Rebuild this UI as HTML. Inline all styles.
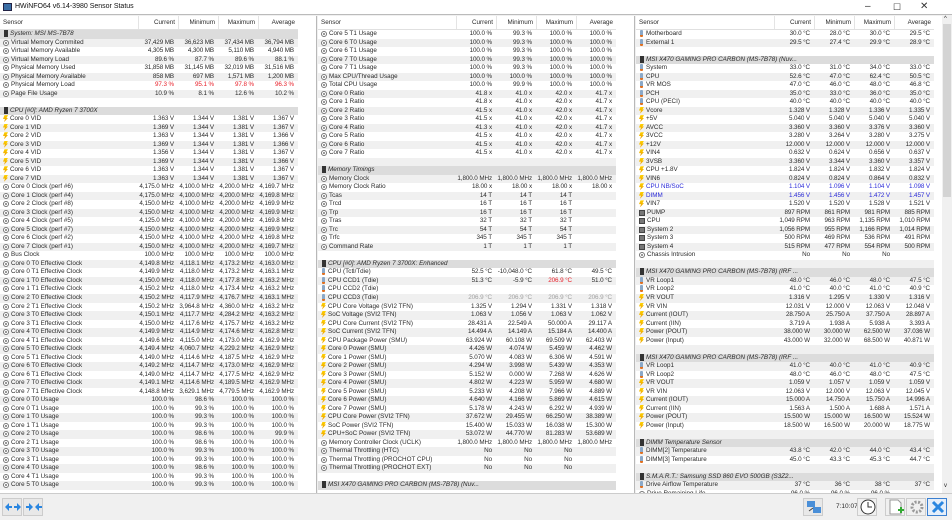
<!DOCTYPE html>
<html><head><meta charset="utf-8">
<style>
*{margin:0;padding:0;box-sizing:border-box}
body{width:952px;height:520px;overflow:hidden;background:#f0f0f0;font-family:"Liberation Sans",sans-serif;font-size:6.3px;color:#2a2a2a;position:relative}
.tb{position:absolute;left:0;top:0;width:952px;height:15px;background:#fff;border-bottom:1px solid #bbb}
.tb .t{position:absolute;left:15px;top:3px;font-size:7px;color:#111}
.tb .ico{position:absolute;left:3px;top:3px;width:9px;height:8px;background:#3a6ea5;border:1px solid #224}
.wc{position:absolute;top:1px;font-size:10px;color:#333}
.p{position:absolute;top:16px;height:477px;overflow:hidden;background:#fff;border-right:1px solid #b8b8b8}
.h{height:14px;display:flex;border-bottom:1px solid #e0e0e0;width:298px}
.h span{display:block;width:40px;text-align:right;padding-right:3px;line-height:13px;border-left:1px solid #e4e4e4}
.h span:first-child{width:138px;text-align:left;padding-left:3px;border-left:none}
.rs>div{height:8.53px;display:flex;width:298px;line-height:8.5px;white-space:nowrap;overflow:hidden}
.rs>div:nth-child(even){background:#f0f0f0}
.rs>div.g{background:#dcdcdc;font-style:italic}
.rs b{font-weight:normal;display:block;width:138px;overflow:hidden;padding-left:2px}
.rs .g b{overflow:visible;width:298px}
.rs s{text-decoration:none;display:block;width:40px;text-align:right;padding-right:4px;letter-spacing:-0.1px}
.red s{color:#e8202a}.blu s,.blu b{color:#2b2bd8}.gry s{color:#a0a0a0}
i{display:inline-block;width:6px;height:6px;margin:1px 2px 0 1px;vertical-align:top}
i.o{border:1px solid #777;border-radius:50%;background:radial-gradient(circle,#777 0 1px,#fff 1px)}
i.v{width:5px;height:7px;margin-top:0;background:linear-gradient(#ffd200,#e89a00);clip-path:polygon(30% 0,100% 0,70% 40%,100% 40%,20% 100%,40% 55%,0 55%)}
i.t{width:3px;height:7px;margin:0 3px 0 2px;margin-top:0;background:linear-gradient(#8aa8c8 0 70%,#e07020 70%);border-radius:1px}
i.f{background:#777;border:1px solid #444}
i.c{width:4px;height:7px;margin-top:0;background:#333;margin-left:2px}
.sb{position:absolute;left:942px;top:16px;width:10px;height:477px;background:#f0f0f0}
.sb div{position:absolute;left:1px;top:8px;width:8px;height:173px;background:#d4d4d4}
.bot{position:absolute;left:0;top:493px;width:952px;height:27px;background:#f0f0f0;border-top:1px solid #ccc}
.btn{position:absolute;top:4px;width:20px;height:18px;border:1px solid #ccc;background:#e8e8e8}
</style></head><body>
<div class="tb"><div class="ico"></div><div class="t">HWiNFO64 v6.14-3980 Sensor Status</div>
<div class="wc" style="left:865px">–</div><div class="wc" style="left:893px;font-size:9px;top:2px">☐</div><div class="wc" style="left:920px">✕</div></div>

<div class="p" style="left:0;width:317px">
<div class="h"><span>Sensor</span><span>Current</span><span>Minimum</span><span>Maximum</span><span>Average</span></div>
<div class="rs">
<div class="g"><b><i class="c"></i>System: MSI MS-7B78</b></div>
<div><b><i class="o"></i>Virtual Memory Commited</b><s>37,429 MB</s><s>36,623 MB</s><s>37,434 MB</s><s>36,794 MB</s></div>
<div><b><i class="o"></i>Virtual Memory Available</b><s>4,305 MB</s><s>4,300 MB</s><s>5,110 MB</s><s>4,940 MB</s></div>
<div><b><i class="o"></i>Virtual Memory Load</b><s>89.6 %</s><s>87.7 %</s><s>89.6 %</s><s>88.1 %</s></div>
<div><b><i class="o"></i>Physical Memory Used</b><s>31,858 MB</s><s>31,145 MB</s><s>32,019 MB</s><s>31,516 MB</s></div>
<div><b><i class="o"></i>Physical Memory Available</b><s>858 MB</s><s>697 MB</s><s>1,571 MB</s><s>1,200 MB</s></div>
<div class="red"><b><i class="o"></i>Physical Memory Load</b><s>97.3 %</s><s>95.1 %</s><s>97.8 %</s><s>96.3 %</s></div>
<div><b><i class="o"></i>Page File Usage</b><s>10.9 %</s><s>8.1 %</s><s>12.6 %</s><s>10.2 %</s></div>
<div><b></b></div>
<div class="g"><b><i class="c"></i>CPU [#0]: AMD Ryzen 7 3700X</b></div>
<div><b><i class="v"></i>Core 0 VID</b><s>1.363 V</s><s>1.344 V</s><s>1.381 V</s><s>1.367 V</s></div>
<div><b><i class="v"></i>Core 1 VID</b><s>1.369 V</s><s>1.344 V</s><s>1.381 V</s><s>1.367 V</s></div>
<div><b><i class="v"></i>Core 2 VID</b><s>1.363 V</s><s>1.344 V</s><s>1.381 V</s><s>1.366 V</s></div>
<div><b><i class="v"></i>Core 3 VID</b><s>1.369 V</s><s>1.344 V</s><s>1.381 V</s><s>1.366 V</s></div>
<div><b><i class="v"></i>Core 4 VID</b><s>1.356 V</s><s>1.344 V</s><s>1.381 V</s><s>1.367 V</s></div>
<div><b><i class="v"></i>Core 5 VID</b><s>1.369 V</s><s>1.344 V</s><s>1.381 V</s><s>1.366 V</s></div>
<div><b><i class="v"></i>Core 6 VID</b><s>1.363 V</s><s>1.344 V</s><s>1.381 V</s><s>1.367 V</s></div>
<div><b><i class="v"></i>Core 7 VID</b><s>1.363 V</s><s>1.344 V</s><s>1.381 V</s><s>1.367 V</s></div>
<div><b><i class="o"></i>Core 0 Clock (perf #6)</b><s>4,175.0 MHz</s><s>4,100.0 MHz</s><s>4,200.0 MHz</s><s>4,169.7 MHz</s></div>
<div><b><i class="o"></i>Core 1 Clock (perf #4)</b><s>4,175.0 MHz</s><s>4,100.0 MHz</s><s>4,200.0 MHz</s><s>4,169.8 MHz</s></div>
<div><b><i class="o"></i>Core 2 Clock (perf #8)</b><s>4,150.0 MHz</s><s>4,100.0 MHz</s><s>4,200.0 MHz</s><s>4,169.9 MHz</s></div>
<div><b><i class="o"></i>Core 3 Clock (perf #3)</b><s>4,150.0 MHz</s><s>4,100.0 MHz</s><s>4,200.0 MHz</s><s>4,169.9 MHz</s></div>
<div><b><i class="o"></i>Core 4 Clock (perf #5)</b><s>4,125.0 MHz</s><s>4,100.0 MHz</s><s>4,200.0 MHz</s><s>4,169.8 MHz</s></div>
<div><b><i class="o"></i>Core 5 Clock (perf #7)</b><s>4,150.0 MHz</s><s>4,100.0 MHz</s><s>4,200.0 MHz</s><s>4,169.9 MHz</s></div>
<div><b><i class="o"></i>Core 6 Clock (perf #2)</b><s>4,150.0 MHz</s><s>4,100.0 MHz</s><s>4,200.0 MHz</s><s>4,169.8 MHz</s></div>
<div><b><i class="o"></i>Core 7 Clock (perf #1)</b><s>4,150.0 MHz</s><s>4,100.0 MHz</s><s>4,200.0 MHz</s><s>4,169.7 MHz</s></div>
<div><b><i class="o"></i>Bus Clock</b><s>100.0 MHz</s><s>100.0 MHz</s><s>100.0 MHz</s><s>100.0 MHz</s></div>
<div><b><i class="o"></i>Core 0 T0 Effective Clock</b><s>4,149.8 MHz</s><s>4,118.1 MHz</s><s>4,173.2 MHz</s><s>4,163.0 MHz</s></div>
<div><b><i class="o"></i>Core 0 T1 Effective Clock</b><s>4,149.9 MHz</s><s>4,118.0 MHz</s><s>4,173.2 MHz</s><s>4,163.1 MHz</s></div>
<div><b><i class="o"></i>Core 1 T0 Effective Clock</b><s>4,150.0 MHz</s><s>4,118.0 MHz</s><s>4,177.8 MHz</s><s>4,163.2 MHz</s></div>
<div><b><i class="o"></i>Core 1 T1 Effective Clock</b><s>4,150.2 MHz</s><s>4,118.0 MHz</s><s>4,173.4 MHz</s><s>4,163.2 MHz</s></div>
<div><b><i class="o"></i>Core 2 T0 Effective Clock</b><s>4,150.2 MHz</s><s>4,117.9 MHz</s><s>4,176.7 MHz</s><s>4,163.1 MHz</s></div>
<div><b><i class="o"></i>Core 2 T1 Effective Clock</b><s>4,150.2 MHz</s><s>3,964.8 MHz</s><s>4,360.0 MHz</s><s>4,163.2 MHz</s></div>
<div><b><i class="o"></i>Core 3 T0 Effective Clock</b><s>4,150.1 MHz</s><s>4,117.7 MHz</s><s>4,284.2 MHz</s><s>4,163.2 MHz</s></div>
<div><b><i class="o"></i>Core 3 T1 Effective Clock</b><s>4,150.0 MHz</s><s>4,117.6 MHz</s><s>4,175.7 MHz</s><s>4,163.2 MHz</s></div>
<div><b><i class="o"></i>Core 4 T0 Effective Clock</b><s>4,149.9 MHz</s><s>4,114.9 MHz</s><s>4,174.6 MHz</s><s>4,162.8 MHz</s></div>
<div><b><i class="o"></i>Core 4 T1 Effective Clock</b><s>4,149.6 MHz</s><s>4,115.0 MHz</s><s>4,173.0 MHz</s><s>4,162.9 MHz</s></div>
<div><b><i class="o"></i>Core 5 T0 Effective Clock</b><s>4,149.4 MHz</s><s>4,060.7 MHz</s><s>4,229.2 MHz</s><s>4,162.9 MHz</s></div>
<div><b><i class="o"></i>Core 5 T1 Effective Clock</b><s>4,149.0 MHz</s><s>4,114.6 MHz</s><s>4,187.5 MHz</s><s>4,162.9 MHz</s></div>
<div><b><i class="o"></i>Core 6 T0 Effective Clock</b><s>4,149.2 MHz</s><s>4,114.7 MHz</s><s>4,173.0 MHz</s><s>4,162.9 MHz</s></div>
<div><b><i class="o"></i>Core 6 T1 Effective Clock</b><s>4,149.0 MHz</s><s>4,114.7 MHz</s><s>4,177.5 MHz</s><s>4,162.9 MHz</s></div>
<div><b><i class="o"></i>Core 7 T0 Effective Clock</b><s>4,149.1 MHz</s><s>4,114.6 MHz</s><s>4,189.5 MHz</s><s>4,162.9 MHz</s></div>
<div><b><i class="o"></i>Core 7 T1 Effective Clock</b><s>4,148.8 MHz</s><s>3,629.1 MHz</s><s>4,779.5 MHz</s><s>4,162.9 MHz</s></div>
<div><b><i class="o"></i>Core 0 T0 Usage</b><s>100.0 %</s><s>98.6 %</s><s>100.0 %</s><s>100.0 %</s></div>
<div><b><i class="o"></i>Core 0 T1 Usage</b><s>100.0 %</s><s>99.3 %</s><s>100.0 %</s><s>100.0 %</s></div>
<div><b><i class="o"></i>Core 1 T0 Usage</b><s>100.0 %</s><s>99.3 %</s><s>100.0 %</s><s>100.0 %</s></div>
<div><b><i class="o"></i>Core 1 T1 Usage</b><s>100.0 %</s><s>99.3 %</s><s>100.0 %</s><s>100.0 %</s></div>
<div><b><i class="o"></i>Core 2 T0 Usage</b><s>100.0 %</s><s>98.6 %</s><s>100.0 %</s><s>99.9 %</s></div>
<div><b><i class="o"></i>Core 2 T1 Usage</b><s>100.0 %</s><s>98.6 %</s><s>100.0 %</s><s>100.0 %</s></div>
<div><b><i class="o"></i>Core 3 T0 Usage</b><s>100.0 %</s><s>99.3 %</s><s>100.0 %</s><s>100.0 %</s></div>
<div><b><i class="o"></i>Core 3 T1 Usage</b><s>100.0 %</s><s>99.3 %</s><s>100.0 %</s><s>100.0 %</s></div>
<div><b><i class="o"></i>Core 4 T0 Usage</b><s>100.0 %</s><s>98.6 %</s><s>100.0 %</s><s>100.0 %</s></div>
<div><b><i class="o"></i>Core 4 T1 Usage</b><s>100.0 %</s><s>99.3 %</s><s>100.0 %</s><s>100.0 %</s></div>
<div><b><i class="o"></i>Core 5 T0 Usage</b><s>100.0 %</s><s>99.3 %</s><s>100.0 %</s><s>100.0 %</s></div>
</div></div>

<div class="p" style="left:318px;width:317px">
<div class="h"><span>Sensor</span><span>Current</span><span>Minimum</span><span>Maximum</span><span>Average</span></div>
<div class="rs">
<div><b><i class="o"></i>Core 5 T1 Usage</b><s>100.0 %</s><s>99.3 %</s><s>100.0 %</s><s>100.0 %</s></div>
<div><b><i class="o"></i>Core 6 T0 Usage</b><s>100.0 %</s><s>99.3 %</s><s>100.0 %</s><s>100.0 %</s></div>
<div><b><i class="o"></i>Core 6 T1 Usage</b><s>100.0 %</s><s>99.3 %</s><s>100.0 %</s><s>100.0 %</s></div>
<div><b><i class="o"></i>Core 7 T0 Usage</b><s>100.0 %</s><s>99.3 %</s><s>100.0 %</s><s>100.0 %</s></div>
<div><b><i class="o"></i>Core 7 T1 Usage</b><s>100.0 %</s><s>99.3 %</s><s>100.0 %</s><s>100.0 %</s></div>
<div><b><i class="o"></i>Max CPU/Thread Usage</b><s>100.0 %</s><s>100.0 %</s><s>100.0 %</s><s>100.0 %</s></div>
<div><b><i class="o"></i>Total CPU Usage</b><s>100.0 %</s><s>99.9 %</s><s>100.0 %</s><s>100.0 %</s></div>
<div><b><i class="o"></i>Core 0 Ratio</b><s>41.8 x</s><s>41.0 x</s><s>42.0 x</s><s>41.7 x</s></div>
<div><b><i class="o"></i>Core 1 Ratio</b><s>41.8 x</s><s>41.0 x</s><s>42.0 x</s><s>41.7 x</s></div>
<div><b><i class="o"></i>Core 2 Ratio</b><s>41.5 x</s><s>41.0 x</s><s>42.0 x</s><s>41.7 x</s></div>
<div><b><i class="o"></i>Core 3 Ratio</b><s>41.5 x</s><s>41.0 x</s><s>42.0 x</s><s>41.7 x</s></div>
<div><b><i class="o"></i>Core 4 Ratio</b><s>41.3 x</s><s>41.0 x</s><s>42.0 x</s><s>41.7 x</s></div>
<div><b><i class="o"></i>Core 5 Ratio</b><s>41.5 x</s><s>41.0 x</s><s>42.0 x</s><s>41.7 x</s></div>
<div><b><i class="o"></i>Core 6 Ratio</b><s>41.5 x</s><s>41.0 x</s><s>42.0 x</s><s>41.7 x</s></div>
<div><b><i class="o"></i>Core 7 Ratio</b><s>41.5 x</s><s>41.0 x</s><s>42.0 x</s><s>41.7 x</s></div>
<div><b></b></div>
<div class="g"><b><i class="c"></i>Memory Timings</b></div>
<div><b><i class="o"></i>Memory Clock</b><s>1,800.0 MHz</s><s>1,800.0 MHz</s><s>1,800.0 MHz</s><s>1,800.0 MHz</s></div>
<div><b><i class="o"></i>Memory Clock Ratio</b><s>18.00 x</s><s>18.00 x</s><s>18.00 x</s><s>18.00 x</s></div>
<div><b><i class="o"></i>Tcas</b><s>14 T</s><s>14 T</s><s>14 T</s><s></s></div>
<div><b><i class="o"></i>Trcd</b><s>16 T</s><s>16 T</s><s>16 T</s><s></s></div>
<div><b><i class="o"></i>Trp</b><s>16 T</s><s>16 T</s><s>16 T</s><s></s></div>
<div><b><i class="o"></i>Tras</b><s>32 T</s><s>32 T</s><s>32 T</s><s></s></div>
<div><b><i class="o"></i>Trc</b><s>54 T</s><s>54 T</s><s>54 T</s><s></s></div>
<div><b><i class="o"></i>Trfc</b><s>345 T</s><s>345 T</s><s>345 T</s><s></s></div>
<div><b><i class="o"></i>Command Rate</b><s>1 T</s><s>1 T</s><s>1 T</s><s></s></div>
<div><b></b></div>
<div class="g"><b><i class="c"></i>CPU [#0]: AMD Ryzen 7 3700X: Enhanced</b></div>
<div><b><i class="t"></i>CPU (Tctl/Tdie)</b><s>52.5 °C</s><s>-10,048.0 °C</s><s>61.8 °C</s><s>49.5 °C</s></div>
<div><b><i class="t"></i>CPU CCD1 (Tdie)</b><s>51.3 °C</s><s>-5.9 °C</s><s style="color:#e8202a">206.9 °C</s><s>51.0 °C</s></div>
<div><b><i class="t"></i>CPU CCD2 (Tdie)</b><s></s><s></s><s></s><s></s></div>
<div class="gry"><b><i class="t"></i>CPU CCD3 (Tdie)</b><s>206.9 °C</s><s>206.9 °C</s><s>206.9 °C</s><s>206.9 °C</s></div>
<div><b><i class="v"></i>CPU Core Voltage (SVI2 TFN)</b><s>1.325 V</s><s>1.294 V</s><s>1.331 V</s><s>1.318 V</s></div>
<div><b><i class="v"></i>SoC Voltage (SVI2 TFN)</b><s>1.063 V</s><s>1.056 V</s><s>1.063 V</s><s>1.062 V</s></div>
<div><b><i class="v"></i>CPU Core Current (SVI2 TFN)</b><s>28.431 A</s><s>22.549 A</s><s>50.000 A</s><s>29.117 A</s></div>
<div><b><i class="v"></i>SoC Current (SVI2 TFN)</b><s>14.494 A</s><s>14.149 A</s><s>15.184 A</s><s>14.400 A</s></div>
<div><b><i class="v"></i>CPU Package Power (SMU)</b><s>63.924 W</s><s>60.108 W</s><s>69.509 W</s><s>62.403 W</s></div>
<div><b><i class="v"></i>Core 0 Power (SMU)</b><s>4.426 W</s><s>4.074 W</s><s>5.459 W</s><s>4.462 W</s></div>
<div><b><i class="v"></i>Core 1 Power (SMU)</b><s>5.070 W</s><s>4.083 W</s><s>6.306 W</s><s>4.591 W</s></div>
<div><b><i class="v"></i>Core 2 Power (SMU)</b><s>4.294 W</s><s>3.998 W</s><s>5.439 W</s><s>4.353 W</s></div>
<div><b><i class="v"></i>Core 3 Power (SMU)</b><s>5.152 W</s><s>0.000 W</s><s>7.268 W</s><s>4.626 W</s></div>
<div><b><i class="v"></i>Core 4 Power (SMU)</b><s>4.802 W</s><s>4.223 W</s><s>5.959 W</s><s>4.680 W</s></div>
<div><b><i class="v"></i>Core 5 Power (SMU)</b><s>5.233 W</s><s>4.208 W</s><s>7.966 W</s><s>4.889 W</s></div>
<div><b><i class="v"></i>Core 6 Power (SMU)</b><s>4.640 W</s><s>4.166 W</s><s>5.869 W</s><s>4.615 W</s></div>
<div><b><i class="v"></i>Core 7 Power (SMU)</b><s>5.178 W</s><s>4.243 W</s><s>6.292 W</s><s>4.939 W</s></div>
<div><b><i class="v"></i>CPU Core Power (SVI2 TFN)</b><s>37.672 W</s><s>29.455 W</s><s>66.250 W</s><s>38.389 W</s></div>
<div><b><i class="v"></i>SoC Power (SVI2 TFN)</b><s>15.400 W</s><s>15.033 W</s><s>16.038 W</s><s>15.300 W</s></div>
<div><b><i class="v"></i>CPU+SoC Power (SVI2 TFN)</b><s>53.072 W</s><s>44.770 W</s><s>81.283 W</s><s>53.689 W</s></div>
<div><b><i class="o"></i>Memory Controller Clock (UCLK)</b><s>1,800.0 MHz</s><s>1,800.0 MHz</s><s>1,800.0 MHz</s><s>1,800.0 MHz</s></div>
<div><b><i class="o"></i>Thermal Throttling (HTC)</b><s>No</s><s>No</s><s>No</s><s></s></div>
<div><b><i class="o"></i>Thermal Throttling (PROCHOT CPU)</b><s>No</s><s>No</s><s>No</s><s></s></div>
<div><b><i class="o"></i>Thermal Throttling (PROCHOT EXT)</b><s>No</s><s>No</s><s>No</s><s></s></div>
<div><b></b></div>
<div class="g"><b><i class="c"></i>MSI X470 GAMING PRO CARBON (MS-7B78) (Nuv...</b></div>
</div></div>

<div class="p" style="left:636px;width:306px;border-right:none">
<div class="h"><span>Sensor</span><span>Current</span><span>Minimum</span><span>Maximum</span><span>Average</span></div>
<div class="rs">
<div><b><i class="t"></i>Motherboard</b><s>30.0 °C</s><s>28.0 °C</s><s>30.0 °C</s><s>29.5 °C</s></div>
<div><b><i class="t"></i>External 1</b><s>29.5 °C</s><s>27.4 °C</s><s>29.9 °C</s><s>28.9 °C</s></div>
<div><b></b></div>
<div class="g"><b><i class="c"></i>MSI X470 GAMING PRO CARBON (MS-7B78) (Nuv...</b></div>
<div><b><i class="t"></i>System</b><s>33.0 °C</s><s>31.0 °C</s><s>34.0 °C</s><s>33.0 °C</s></div>
<div><b><i class="t"></i>CPU</b><s>52.6 °C</s><s>47.0 °C</s><s>62.4 °C</s><s>50.5 °C</s></div>
<div><b><i class="t"></i>VR MOS</b><s>47.0 °C</s><s>46.0 °C</s><s>48.0 °C</s><s>46.8 °C</s></div>
<div><b><i class="t"></i>PCH</b><s>35.0 °C</s><s>33.0 °C</s><s>36.0 °C</s><s>35.0 °C</s></div>
<div><b><i class="t"></i>CPU (PECI)</b><s>40.0 °C</s><s>40.0 °C</s><s>40.0 °C</s><s>40.0 °C</s></div>
<div><b><i class="v"></i>Vcore</b><s>1.328 V</s><s>1.328 V</s><s>1.336 V</s><s>1.335 V</s></div>
<div><b><i class="v"></i>+5V</b><s>5.040 V</s><s>5.040 V</s><s>5.040 V</s><s>5.040 V</s></div>
<div><b><i class="v"></i>AVCC</b><s>3.360 V</s><s>3.360 V</s><s>3.376 V</s><s>3.360 V</s></div>
<div><b><i class="v"></i>3VCC</b><s>3.280 V</s><s>3.264 V</s><s>3.280 V</s><s>3.275 V</s></div>
<div><b><i class="v"></i>+12V</b><s>12.000 V</s><s>12.000 V</s><s>12.000 V</s><s>12.000 V</s></div>
<div><b><i class="v"></i>VIN4</b><s>0.632 V</s><s>0.624 V</s><s>0.656 V</s><s>0.637 V</s></div>
<div><b><i class="v"></i>3VSB</b><s>3.360 V</s><s>3.344 V</s><s>3.360 V</s><s>3.357 V</s></div>
<div><b><i class="v"></i>CPU +1.8V</b><s>1.824 V</s><s>1.824 V</s><s>1.832 V</s><s>1.824 V</s></div>
<div><b><i class="v"></i>VIN6</b><s>0.824 V</s><s>0.824 V</s><s>0.864 V</s><s>0.832 V</s></div>
<div class="blu"><b><i class="v"></i>CPU NB/SoC</b><s>1.104 V</s><s>1.096 V</s><s>1.104 V</s><s>1.098 V</s></div>
<div class="blu"><b><i class="v"></i>DIMM</b><s>1.456 V</s><s>1.456 V</s><s>1.472 V</s><s>1.457 V</s></div>
<div><b><i class="v"></i>VIN7</b><s>1.520 V</s><s>1.520 V</s><s>1.528 V</s><s>1.521 V</s></div>
<div><b><i class="f"></i>PUMP</b><s>897 RPM</s><s>861 RPM</s><s>981 RPM</s><s>885 RPM</s></div>
<div><b><i class="f"></i>CPU</b><s>1,049 RPM</s><s>963 RPM</s><s>1,135 RPM</s><s>1,010 RPM</s></div>
<div><b><i class="f"></i>System 2</b><s>1,056 RPM</s><s>955 RPM</s><s>1,166 RPM</s><s>1,014 RPM</s></div>
<div><b><i class="f"></i>System 3</b><s>500 RPM</s><s>469 RPM</s><s>536 RPM</s><s>491 RPM</s></div>
<div><b><i class="f"></i>System 4</b><s>515 RPM</s><s>477 RPM</s><s>554 RPM</s><s>500 RPM</s></div>
<div><b><i class="o"></i>Chassis Intrusion</b><s>No</s><s>No</s><s>No</s><s></s></div>
<div><b></b></div>
<div class="g"><b><i class="c"></i>MSI X470 GAMING PRO CARBON (MS-7B78) (IRF ...</b></div>
<div><b><i class="t"></i>VR Loop1</b><s>48.0 °C</s><s>46.0 °C</s><s>48.0 °C</s><s>47.5 °C</s></div>
<div><b><i class="t"></i>VR Loop2</b><s>41.0 °C</s><s>40.0 °C</s><s>41.0 °C</s><s>40.9 °C</s></div>
<div><b><i class="v"></i>VR VOUT</b><s>1.316 V</s><s>1.295 V</s><s>1.330 V</s><s>1.316 V</s></div>
<div><b><i class="v"></i>VR VIN</b><s>12.031 V</s><s>12.000 V</s><s>12.063 V</s><s>12.048 V</s></div>
<div><b><i class="v"></i>Current (IOUT)</b><s>28.750 A</s><s>25.750 A</s><s>37.750 A</s><s>28.897 A</s></div>
<div><b><i class="v"></i>Current (IIN)</b><s>3.719 A</s><s>1.938 A</s><s>5.938 A</s><s>3.393 A</s></div>
<div><b><i class="v"></i>Power (POUT)</b><s>38.000 W</s><s>30.000 W</s><s>62.500 W</s><s>37.036 W</s></div>
<div><b><i class="v"></i>Power (Input)</b><s>43.000 W</s><s>32.000 W</s><s>68.500 W</s><s>40.871 W</s></div>
<div><b></b></div>
<div class="g"><b><i class="c"></i>MSI X470 GAMING PRO CARBON (MS-7B78) (IRF ...</b></div>
<div><b><i class="t"></i>VR Loop1</b><s>41.0 °C</s><s>40.0 °C</s><s>41.0 °C</s><s>40.9 °C</s></div>
<div><b><i class="t"></i>VR Loop2</b><s>48.0 °C</s><s>46.0 °C</s><s>48.0 °C</s><s>47.5 °C</s></div>
<div><b><i class="v"></i>VR VOUT</b><s>1.059 V</s><s>1.057 V</s><s>1.059 V</s><s>1.059 V</s></div>
<div><b><i class="v"></i>VR VIN</b><s>12.063 V</s><s>12.000 V</s><s>12.063 V</s><s>12.045 V</s></div>
<div><b><i class="v"></i>Current (IOUT)</b><s>15.000 A</s><s>14.750 A</s><s>15.750 A</s><s>14.996 A</s></div>
<div><b><i class="v"></i>Current (IIN)</b><s>1.563 A</s><s>1.500 A</s><s>1.688 A</s><s>1.571 A</s></div>
<div><b><i class="v"></i>Power (POUT)</b><s>15.500 W</s><s>15.000 W</s><s>16.500 W</s><s>15.524 W</s></div>
<div><b><i class="v"></i>Power (Input)</b><s>18.500 W</s><s>16.500 W</s><s>20.000 W</s><s>18.775 W</s></div>
<div><b></b></div>
<div class="g"><b><i class="c"></i>DIMM Temperature Sensor</b></div>
<div><b><i class="t"></i>DIMM[2] Temperature</b><s>43.8 °C</s><s>42.0 °C</s><s>44.0 °C</s><s>43.4 °C</s></div>
<div><b><i class="t"></i>DIMM[3] Temperature</b><s>45.0 °C</s><s>43.3 °C</s><s>45.3 °C</s><s>44.7 °C</s></div>
<div><b></b></div>
<div class="g"><b><i class="c"></i>S.M.A.R.T.: Samsung SSD 860 EVO 500GB (S3Z2...</b></div>
<div><b><i class="t"></i>Drive Airflow Temperature</b><s>37 °C</s><s>36 °C</s><s>38 °C</s><s>37 °C</s></div>
<div><b><i class="o"></i>Drive Remaining Life</b><s>96.0 %</s><s>96.0 %</s><s>96.0 %</s><s></s></div>
</div></div>
<div class="sb"><div></div><span style="position:absolute;left:2px;top:0;font-size:6px">^</span><span style="position:absolute;left:2px;top:467px;font-size:6px">v</span></div>

<div class="bot">
<div class="btn" style="left:2px"><svg width="20" height="16"><path d="M2 8l4-4v3h3v2H6v3z M18 8l-4-4v3h-3v2h3v3z" fill="#2a86e0"/></svg></div>
<div class="btn" style="left:23px"><svg width="20" height="16"><path d="M9 8L5 4v3H2v2h3v3z M11 8l4-4v3h3v2h-3v3z" fill="#2a86e0"/></svg></div>
<div class="btn" style="left:803px"><svg width="20" height="16"><rect x="3" y="2" width="8" height="6" fill="#4a8fd8"/><rect x="9" y="8" width="8" height="6" fill="#4a8fd8"/><path d="M5 12l4-3" stroke="#444"/></svg></div>
<div style="position:absolute;left:836px;top:9px;font-size:6.5px">7:10:07</div>
<div class="btn" style="left:857px;background:#f0f0f0"><svg width="20" height="16"><circle cx="10" cy="8" r="7" fill="#fff" stroke="#333"/><path d="M10 3v5h4" stroke="#333" fill="none"/></svg></div>
<div class="btn" style="left:885px;background:#f0f0f0"><svg width="20" height="16"><path d="M4 1h8l3 3v11H4z" fill="#fff" stroke="#999"/><path d="M12 11h6M15 8v6" stroke="#3a3" stroke-width="2"/></svg></div>
<div class="btn" style="left:906px;background:#f0f0f0"><svg width="20" height="16"><circle cx="10" cy="8" r="5" fill="none" stroke="#999" stroke-width="3" stroke-dasharray="2 1.5"/></svg></div>
<div class="btn" style="left:927px;border:1px solid #3a7fd0;background:#e4eefa"><svg width="20" height="16"><path d="M5 3l10 10M15 3L5 13" stroke="#2a86e0" stroke-width="3"/></svg></div>
</div>
</body></html>
